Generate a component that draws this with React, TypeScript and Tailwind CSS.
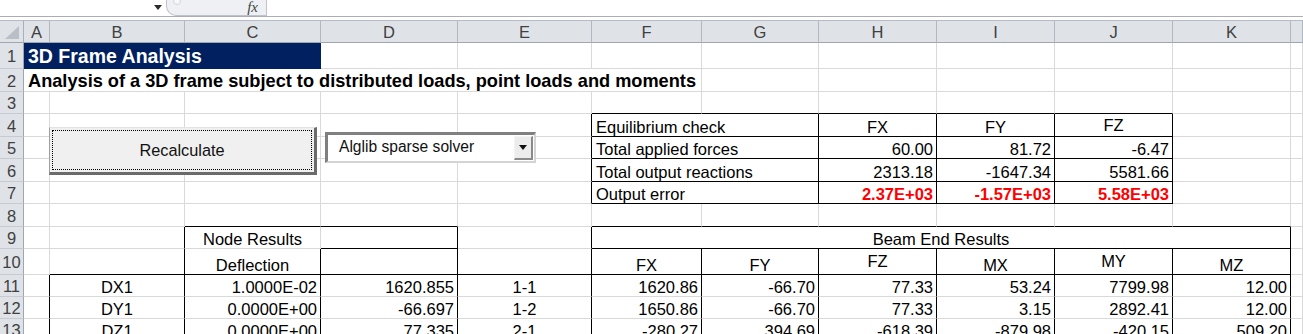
import React from 'react';
import clsx from 'clsx';

type Cell = {
  t?: string;
  span?: 2 | 3 | 6;
  a?: 'l' | 'c' | 'r';
  r?: boolean; // black right edge
  b?: boolean; // black bottom edge
  fill?: boolean;
  x?: string;
};

const SPAN: Record<number, string> = { 2: 'col-span-2', 3: 'col-span-3', 6: 'col-span-6' };
const ALIGN = { l: 'justify-start pl-[4px]', c: 'justify-center', r: 'justify-end pr-[3px]' };

const blank = (n: number, o: Cell = {}): Cell[] => Array.from({ length: n }, () => ({ ...o }));

const eqRow = (label: string, vals: string[], x?: string, a: 'c' | 'r' = 'r'): Cell[] => [
  ...blank(4),
  { r: true },
  { t: label, span: 2, a: 'l', r: true, b: true },
  ...vals.map((v, i) => ({ t: v, a, r: true, b: true, x: typeof x === 'string' ? x : i === 2 && a === 'c' ? 'pb-[2px]' : undefined })),
  ...blank(2),
];

const dataRow = (node: string, defl: string, val: string, beam: string, forces: string[]): Cell[] => [
  { r: true },
  { t: node, a: 'c', r: true },
  { t: defl, a: 'r', r: true },
  { t: val, a: 'r', r: true },
  { t: beam, a: 'c', r: true },
  ...forces.map((v) => ({ t: v, a: 'r' as const, r: true })),
  {},
];

const ROWS: Cell[][] = [
  [{ t: '3D Frame Analysis', span: 3, fill: true, x: 'text-white font-bold text-[19.5px] leading-[22px] pl-[4px] pb-[1px]' }, ...blank(9)],
  [
    {
      t: 'Analysis of a 3D frame subject to distributed loads, point loads and moments',
      span: 6,
      a: 'l',
      x: 'font-bold text-[18.2px] leading-[20px]',
    },
    ...blank(6),
  ],
  [...blank(5), ...blank(5, { b: true }), ...blank(2)],
  eqRow('Equilibrium check', ['FX', 'FY', 'FZ'], undefined, 'c'),
  eqRow('Total applied forces', ['60.00', '81.72', '-6.47']),
  eqRow('Total output reactions', ['2313.18', '-1647.34', '5581.66']),
  eqRow('Output error', ['2.37E+03', '-1.57E+03', '5.58E+03'], 'text-[#ff0000] font-bold'),
  [{}, {}, { b: true }, { b: true }, {}, ...blank(6, { b: true }), {}],
  [
    {},
    { r: true },
    { t: 'Node Results', a: 'c' },
    { r: true, b: true },
    { r: true },
    { t: 'Beam End Results', span: 6, a: 'c', r: true, b: true },
    {},
  ],
  [
    {},
    { r: true, b: true },
    { t: 'Deflection', a: 'c', r: true, b: true },
    { r: true, b: true },
    { r: true, b: true },
    ...['FX', 'FY', 'FZ', 'MX', 'MY', 'MZ'].map((h) => ({
      t: h,
      a: 'c' as const,
      r: true,
      b: true,
      x: h === 'FZ' || h === 'MY' ? 'pb-[4px]' : undefined,
    })),
    {},
  ],
  dataRow('DX1', '1.0000E-02', '1620.855', '1-1', ['1620.86', '-66.70', '77.33', '53.24', '7799.98', '12.00']),
  dataRow('DY1', '0.0000E+00', '-66.697', '1-2', ['1650.86', '-66.70', '77.33', '3.15', '2892.41', '12.00']),
  dataRow('DZ1', '0.0000E+00', '77.335', '2-1', ['-280.27', '394.69', '-618.39', '-879.98', '-420.15', '509.20']),
];

const LETTERS = ['A', 'B', 'C', 'D', 'E', 'F', 'G', 'H', 'I', 'J', 'K', ''];

function FormulaBar() {
  return (
    <div className="flex h-[17px] border-b border-[#a9aeb5] bg-white">
      <div className="w-[150px]" />
      <div className="flex w-[16px] items-start justify-center pt-[5px]">
        <svg width="8" height="5" viewBox="0 0 8 5">
          <polygon points="0,0 8,0 4,5" fill="#2b2b2b" />
        </svg>
      </div>
      <div className="relative flex w-[101px] items-start justify-end rounded-bl-[10px] border-l border-r border-b border-[#bfc4ca] bg-[#eef0f3] pr-[8px]">
        <span className="absolute left-[6px] top-[-3px] h-[8px] w-[8px] rounded-full border border-[#d2d6dc] bg-[#f6f7f9]" />
        <span className="font-['Liberation_Serif',serif] text-[15px] italic leading-[15px] text-[#444]">fx</span>
      </div>
      <div className="flex-1" />
    </div>
  );
}

function SheetButton() {
  return (
    <div className="absolute left-[49px] top-[107px] h-[48px] w-[268px] border-l border-t border-l-[#a0a0a0] border-t-[#e3e3e3] border-r-[3px] border-b-[3px] border-r-[#6b6b6b] border-b-[#6b6b6b] bg-[#f0f0f0] p-[2px]">
      <div className="flex h-full w-full items-center justify-center border border-dotted border-black pt-[1px] text-[16.3px] text-[#111]">
        Recalculate
      </div>
    </div>
  );
}

function SolverSelect() {
  return (
    <div className="absolute left-[325px] top-[112px] flex h-[31px] w-[211px] items-stretch border-l-[3px] border-t-[3px] border-r-[2px] border-b-[2px] border-l-[#808080] border-t-[#808080] border-r-[#d4d4d4] border-b-[#d4d4d4] bg-white">
      <div className="flex flex-1 items-start pl-[11px] pt-[3px] text-[15.6px] leading-[18px] text-[#111]">
        Alglib sparse solver
      </div>
      <div className="my-[1px] mr-[1px] flex w-[19px] items-center justify-center border-l border-t border-l-[#f4f4f4] border-t-[#f4f4f4] border-r-2 border-b-2 border-r-[#8a8a8a] border-b-[#8a8a8a] bg-[#ececec]">
        <svg width="8" height="5" viewBox="0 0 8 5">
          <polygon points="0,0 8,0 4,5" fill="#111" />
        </svg>
      </div>
    </div>
  );
}

export default function App() {
  return (
    <div className="h-[334px] w-[1303px] overflow-hidden bg-white font-['Liberation_Sans',Arial,sans-serif] text-black">
      <FormulaBar />
      <div className="h-[3px]" />
      <div className="relative">
        <div className="grid grid-cols-[24px_26px_135px_136px_137px_134px_110px_117px_118px_118px_118px_118px_1fr] grid-rows-[22px_26px_23px_22px_23px_22px_23px_22px_23px_22px_26px_22px_22px_22px] border-t border-[#b4bbc4]">
          {/* corner */}
          <div className="relative border-r border-b border-r-[#a9b0b9] border-b-[#9ea6b0] bg-[#dfe3e8]">
            <svg className="absolute left-[5px] top-[5px]" width="14" height="13" viewBox="0 0 14 13">
              <polygon points="14,0 14,13 0,13" fill="#b9bfc7" />
            </svg>
          </div>
          {LETTERS.map((l, i) => (
            <div
              key={`h${i}`}
              className="flex items-center justify-center border-r border-b border-r-[#b0b7c0] border-b-[#9ea6b0] bg-[#dfe3e8] pt-[1px] text-[16.5px] text-[#404040]"
            >
              {l}
            </div>
          ))}

          {ROWS.map((row, ri) => (
            <React.Fragment key={`r${ri}`}>
              <div className="flex items-center justify-center border-r border-b border-r-[#9ea6b0] border-b-[#c6cbd2] bg-[#dfe3e8] pt-[2px] text-[16.5px] text-[#404040]">
                {ri + 1}
              </div>
              {row.map((c, ci) => (
                <div
                  key={`c${ri}-${ci}`}
                  className={clsx(
                    'flex items-end whitespace-nowrap border-r border-b text-[16.5px] leading-[18px]',
                    c.span && SPAN[c.span],
                    c.a && ALIGN[c.a],
                    c.fill
                      ? 'bg-[#002060] border-r-[#002060] border-b-[#002060]'
                      : clsx(c.r ? 'border-r-black' : 'border-r-[#d9d9d9]', c.b ? 'border-b-black' : 'border-b-[#d9d9d9]'),
                    c.x
                  )}
                >
                  {c.t}
                </div>
              ))}
            </React.Fragment>
          ))}
        </div>

        <SheetButton />
        <SolverSelect />
      </div>
    </div>
  );
}
